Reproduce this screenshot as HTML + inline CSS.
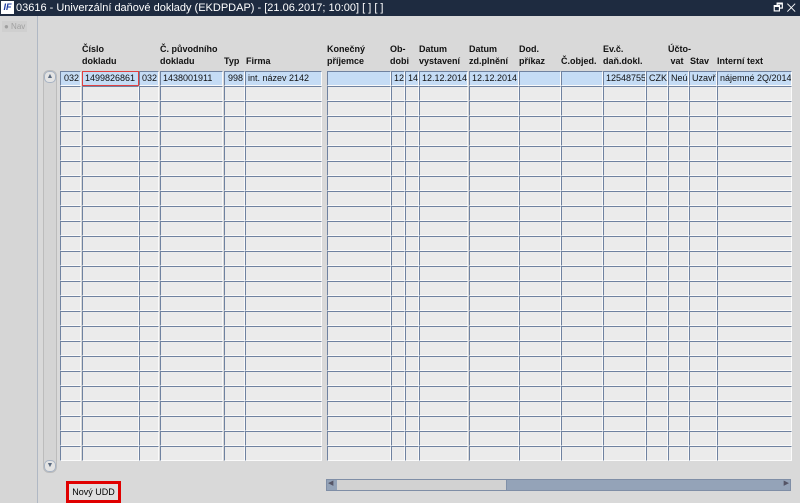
<!DOCTYPE html>
<html><head><meta charset="utf-8"><style>
*{margin:0;padding:0;box-sizing:border-box}
body{width:800px;height:503px;overflow:hidden;background:#d9d9d9;font-family:"Liberation Sans",Arial,sans-serif;position:relative}
#title{position:absolute;left:0;top:0;width:800px;height:16px;background:#1e2b40;color:#fff;font-size:11px;line-height:16px;padding-left:16px;white-space:nowrap}
#logo{position:absolute;left:1px;top:1px;width:13px;height:13px;background:#fff;color:#1a3aa0;font:italic bold 9px/13px "Liberation Sans",sans-serif;text-align:center}
#left{position:absolute;left:0;top:16px;width:38px;height:487px;background:#d6d6d6;border-right:1px solid #b0b8c4}
#nav{position:absolute;left:2px;top:5px;font-size:8px;color:#a0a0a0;background:#cfcfcf;padding:1px 2px}
.h{position:absolute;font-size:9px;font-weight:bold;color:#111;line-height:12px;top:43px}
.c{position:absolute;height:15px;background:#ebebeb;border-top:1px solid #6f82a0;border-left:1px solid #6f82a0;border-right:1px solid #fafafa;border-bottom:1px solid #fafafa;font-size:9px;line-height:13px;padding-left:2px;white-space:nowrap;overflow:hidden;color:#111}
.s{background:#c5dcf5}
#vs{position:absolute;left:43px;top:70px;width:14px;height:403px;background:#d4d4d4;border:1px solid #bcbcbc;border-radius:6px}
.arr{position:absolute;left:44px;width:12px;height:12px;background:#e4e4e4;border:1px solid #a7b3c4;border-radius:5px;font-size:7px;text-align:center;line-height:10px;color:#5a6a80}
#hs{position:absolute;left:326px;top:479px;width:465px;height:12px;background:#94a3b8;border:1px solid #7f8ea6}
#thumb{position:absolute;left:10px;top:0;width:170px;height:10px;background:#d2d2d2;border-right:1px solid #8090a8}
#btn{position:absolute;left:66px;top:481px;width:55px;height:22px;border:3px solid #e00000;background:#e0e0e0;font-size:9px;text-align:center;line-height:16px}
</style></head><body>
<div id="title"><div id="logo">IF</div>03616 - Univerzální daňové doklady (EKDPDAP) - [21.06.2017; 10:00]  [ ]  [ ]<span style="position:absolute;right:4px;top:0">🗗 ✕</span></div>
<div id="left"><div id="nav">● Nav</div></div>
<div class="h" style="left:82px">Číslo<br>dokladu</div>
<div class="h" style="left:160px">Č. původního<br>dokladu</div>
<div class="h" style="left:224px;top:55px">Typ</div>
<div class="h" style="left:246px;top:55px">Firma</div>
<div class="h" style="left:327px">Konečný<br>příjemce</div>
<div class="h" style="left:390px">Ob-<br>dobi</div>
<div class="h" style="left:419px">Datum<br>vystavení</div>
<div class="h" style="left:469px">Datum<br>zd.plnění</div>
<div class="h" style="left:519px">Dod.<br>příkaz</div>
<div class="h" style="left:561px;top:55px">Č.objed.</div>
<div class="h" style="left:603px">Ev.č.<br>daň.dokl.</div>
<div class="h" style="left:668px">Účto-<br>&nbsp;vat</div>
<div class="h" style="left:690px;top:55px">Stav</div>
<div class="h" style="left:717px;top:55px">Interní text</div>
<div id="vs"></div>
<div class="arr" style="top:71px">▲</div>
<div class="arr" style="top:460px">▼</div>
<div id="grid"></div>
<div id="hs"><div id="thumb"></div><span style="position:absolute;left:1px;top:-1px;font-size:7px;color:#556">◀</span><span style="position:absolute;right:1px;top:-1px;font-size:7px;color:#556">▶</span></div>
<div id="btn">Nový UDD</div>
<script>
var cols=[[60,81],[82,139],[139,159],[160,223],[224,245],[245,322],[327,391],[391,405],[405,419],[419,468],[469,519],[519,561],[561,603],[603,646],[646,668],[668,689],[689,717],[717,792]];
var d=["032","1499826861","032","1438001911","998","int. název 2142","","12","14","12.12.2014","12.12.2014","","","12548755","CZK","Neúč","Uzavř","nájemné 2Q/2014"];
var h="";
for(var r=0;r<26;r++){for(var i=0;i<cols.length;i++){var x=cols[i][0],w=cols[i][1]-x;var cls="c"+(r==0?" s":"");var st="left:"+x+"px;top:"+(71+r*15)+"px;width:"+w+"px;";if(r==0&&i==1)st+="border:1px solid #e04040;";if(r==0&&(i==0||i==2||i==4))st+="text-align:right;padding-right:1px;";h+='<div class="'+cls+'" style="'+st+'">'+(r==0?d[i]:"")+"</div>";}}
document.getElementById("grid").innerHTML=h;
</script>
</body></html>
